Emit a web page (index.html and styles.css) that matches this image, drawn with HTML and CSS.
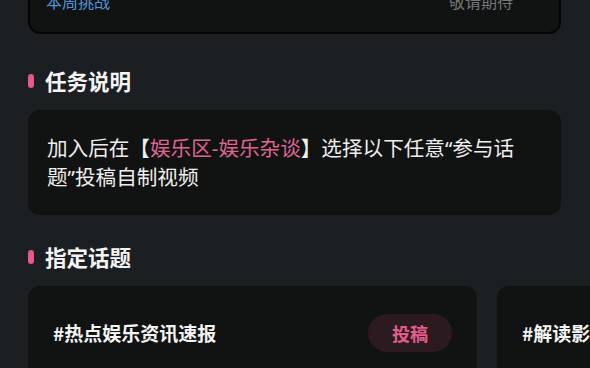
FILE: index.html
```html
<!DOCTYPE html>
<html lang="zh-CN">
<head>
<meta charset="utf-8">
<title>任务说明</title>
<link rel="stylesheet" href="styles.css">
</head>
<body>
<div class="page">
  <div class="challenge-card">
    <span class="challenge-title">本周挑战</span>
    <span class="challenge-status">敬请期待</span>
  </div>

  <section class="section section-task">
    <h2 class="section-title"><span class="pill"></span>任务说明</h2>
    <div class="desc-card">
      <p class="desc-text">加入后在【<span class="hl">娱乐区-娱乐杂谈</span>】选择以下任意“参与话题”投稿自制视频</p>
    </div>
  </section>

  <section class="section section-topics">
    <h2 class="section-title"><span class="pill"></span>指定话题</h2>
    <div class="topic-row">
      <div class="topic-card">
        <span class="topic-name">#热点娱乐资讯速报</span>
        <button class="topic-btn">投稿</button>
      </div>
      <div class="topic-card">
        <span class="topic-name">#解读影视娱乐热点</span>
        <button class="topic-btn">投稿</button>
      </div>
    </div>
  </section>
</div>
</body>
</html>
```

FILE: styles.css
```css
html, body {
  margin: 0;
  padding: 0;
  background: #1b1f22;
  overflow: hidden;
}
body {
  width: 590px;
  height: 368px;
  font-family: "Noto Sans CJK SC", "Noto Sans", sans-serif;
  color: #f2f2f2;
}
.page {
  padding: 0 29px 0 28px;
}
.challenge-card {
  margin-top: -30px;
  display: flex;
  justify-content: space-between;
  align-items: center;
  padding: 20px 46px 22px 16px;
  background: #111312;
  border: 2px solid #050505;
  border-radius: 12px;
  font-size: 16px;
  line-height: 18px;
}
.challenge-title {
  color: #5093dc;
}
.challenge-status {
  color: #74777a;
}
.section-task {
  margin-top: 33px;
}
.section-topics {
  margin-top: 28px;
}
.section-title {
  display: flex;
  align-items: center;
  gap: 11px;
  margin: 0;
  font-size: 21.5px;
  line-height: 28px;
  font-weight: 700;
  color: #f4f4f4;
}
.pill {
  width: 6px;
  height: 14px;
  border-radius: 3px;
  background: #e8588a;
}
.desc-card {
  margin-top: 15px;
  background: #111312;
  border-radius: 12px;
  padding: 24px 34px 23px 19px;
}
.desc-text {
  margin: 0;
  font-family: "Noto Sans", "Noto Sans CJK SC", sans-serif;
  font-size: 20.6px;
  line-height: 29px;
  color: #eeeeee;
}
.hl {
  color: #df6590;
}
.topic-row {
  margin-top: 15px;
  display: flex;
  gap: 20px;
  margin-right: -29px;
}
.topic-card {
  flex: 0 0 449px;
  box-sizing: border-box;
  height: 120px;
  padding: 28px 25px 0 25px;
  background: #111312;
  border-radius: 12px;
  display: flex;
  justify-content: space-between;
  align-items: flex-start;
}
.topic-name {
  font-size: 19px;
  font-weight: 700;
  line-height: 38px;
  color: #f4f4f4;
}
.topic-btn {
  width: 84px;
  height: 38px;
  border: none;
  border-radius: 19px;
  background: #2b1b21;
  color: #e45d8b;
  font-family: inherit;
  font-size: 18px;
  font-weight: 700;
  padding: 0;
}
```
